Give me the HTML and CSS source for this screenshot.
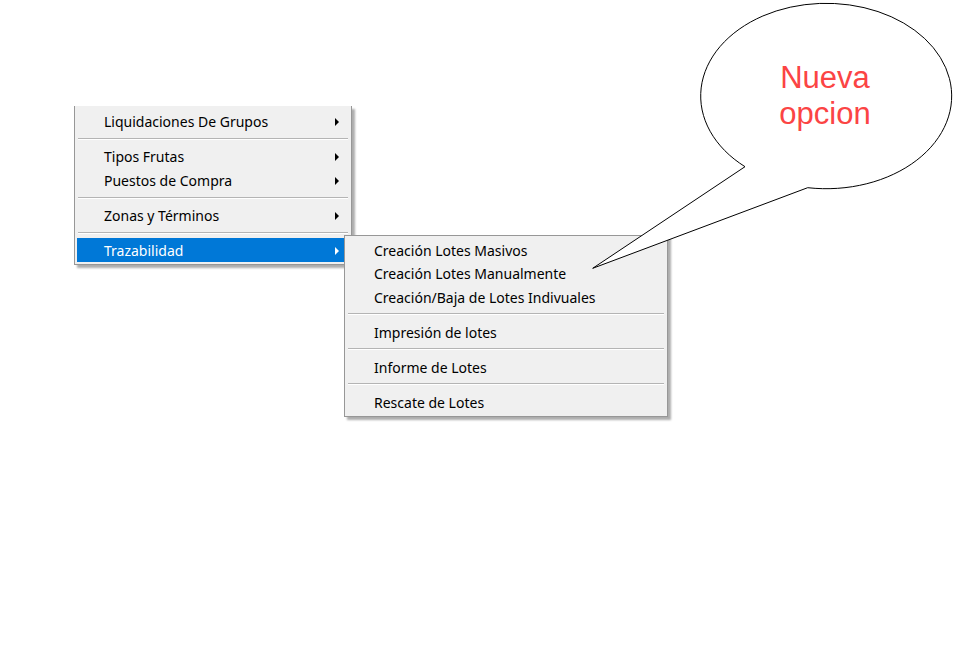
FILE: index.html
```html
<!DOCTYPE html>
<html lang="es">
<head>
<meta charset="utf-8">
<title>Menú Trazabilidad</title>
<link rel="stylesheet" href="styles.css">
</head>
<body>
<div class="stage">
  <div class="menu main-menu">
    <div class="item"><span class="label">Liquidaciones De Grupos</span><span class="arrow"></span></div>
    <div class="sep"></div>
    <div class="item"><span class="label">Tipos Frutas</span><span class="arrow"></span></div>
    <div class="item"><span class="label">Puestos de Compra</span><span class="arrow"></span></div>
    <div class="sep"></div>
    <div class="item"><span class="label">Zonas y Términos</span><span class="arrow"></span></div>
    <div class="sep"></div>
    <div class="item selected"><span class="label">Trazabilidad</span><span class="arrow"></span></div>

    <div class="menu sub-menu">
      <div class="item"><span class="label">Creación Lotes Masivos</span></div>
      <div class="item"><span class="label">Creación Lotes Manualmente</span></div>
      <div class="item"><span class="label">Creación/Baja de Lotes Indivuales</span></div>
      <div class="sep"></div>
      <div class="item"><span class="label">Impresión de lotes</span></div>
      <div class="sep"></div>
      <div class="item"><span class="label">Informe de Lotes</span></div>
      <div class="sep"></div>
      <div class="item"><span class="label">Rescate de Lotes</span></div>
    </div>
  </div>
</div>

<svg class="callout" width="957" height="662" viewBox="0 0 957 662" xmlns="http://www.w3.org/2000/svg">
  <path d="M745 166.7 A125.5 92.7 0 1 1 807.7 187.7 L592.7 268.3 Z" fill="#ffffff" stroke="#000000" stroke-width="1"/>
  <text class="callout-text" x="825" y="88" text-anchor="middle">Nueva</text>
  <text class="callout-text" x="825" y="124" text-anchor="middle">opcion</text>
</svg>
</body>
</html>
```

FILE: styles.css
```css
html, body {
  margin: 0;
  padding: 0;
  background: #ffffff;
}

body {
  width: 957px;
  height: 662px;
  overflow: hidden;
  position: relative;
  font-family: "Noto Sans", "Open Sans", sans-serif;
}

.stage {
  padding: 106px 0 0 74px;
}

.menu {
  background: #f0f0f0;
  border: 1px solid #979797;
  box-shadow: 3px 3px 2px rgba(0, 0, 0, 0.32);
  box-sizing: border-box;
}

.main-menu {
  position: relative;
  width: 278px;
  border-top: none;
  padding: 3px 0 2px;
}

.sub-menu {
  position: absolute;
  left: 269px;
  top: 129px;
  width: 324px;
  padding: 2px 0 2px;
}

.item {
  display: flex;
  align-items: center;
  height: 24px;
  margin: 0 2px;
  padding-left: 27px;
  font-size: 14px;
  color: #000000;
  white-space: nowrap;
}

.sub-menu .item {
  height: 23.5px;
}

.label {
  flex: 1;
  line-height: 1;
  padding-top: 2px;
}

.arrow {
  width: 0;
  height: 0;
  border-top: 4px solid transparent;
  border-bottom: 4px solid transparent;
  border-left: 4px solid #000000;
  margin-right: 10px;
  margin-top: 1px;
}

.item.selected {
  background: #0078d7;
  color: #ffffff;
}

.item.selected .arrow {
  border-left-color: #ffffff;
}

.sep {
  height: 11px;
  margin: 0 3px;
  display: flex;
  align-items: center;
}

.sub-menu .sep {
  height: 11.5px;
}

.sep::before {
  content: "";
  display: block;
  width: 100%;
  height: 1px;
  background: #b4b4b4;
  border-bottom: 1px solid #ffffff;
}

.callout {
  position: absolute;
  left: 0;
  top: 0;
}

.callout-text {
  font-family: "Liberation Sans", Arial, sans-serif;
  font-size: 31px;
  fill: #fb4444;
}
```
